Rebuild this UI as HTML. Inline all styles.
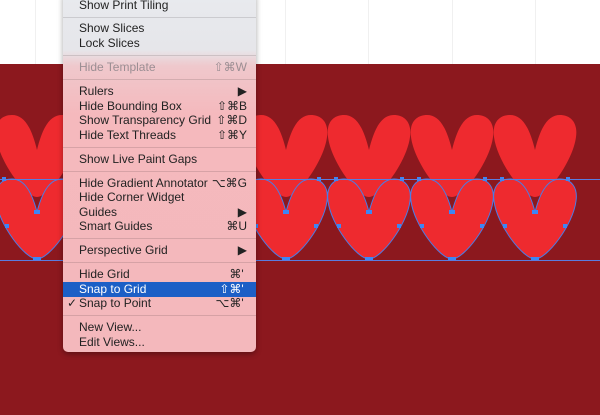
<!DOCTYPE html><html><head><style>
body{margin:0;width:600px;height:415px;overflow:hidden;position:relative;background:#fff;font-family:"Liberation Sans",sans-serif}
#bg{position:absolute;left:0;top:0}
.menu{position:absolute;left:63px;top:-6px;width:193px;height:358px;border-radius:0 0 5px 5px;background:linear-gradient(#e8eaee 0,#e6e6ea 56px,#efc8cc 72px,#f5b9bd 120px,#f4b8bc 100%);box-shadow:0 2px 6px rgba(0,0,0,.35);font-size:12px;color:#222}
.it{position:absolute;left:16px;right:9px;height:15px;line-height:15px}
.it span{position:absolute;right:0;top:0}
.dis{color:#9b8e93}
.sep{position:absolute;left:0;right:0;height:1px;background:rgba(0,0,0,.12)}
.hl{position:absolute;left:0;right:0;height:15px;background:#1c5fc6}
</style></head><body>
<svg id="bg" width="600" height="415" xmlns="http://www.w3.org/2000/svg"></svg>
<div class="menu">
<div class="it" style="top:4px">Show Print Tiling</div>
<div class="sep" style="top:23px"></div>
<div class="it" style="top:27px">Show Slices</div>
<div class="it" style="top:42px">Lock Slices</div>
<div class="sep" style="top:61px"></div>
<div class="it dis" style="top:66px">Hide Template<span>⇧⌘W</span></div>
<div class="sep" style="top:85px"></div>
<div class="it" style="top:90px">Rulers<span>▶</span></div>
<div class="it" style="top:105px">Hide Bounding Box<span>⇧⌘B</span></div>
<div class="it" style="top:119px">Show Transparency Grid<span>⇧⌘D</span></div>
<div class="it" style="top:134px">Hide Text Threads<span>⇧⌘Y</span></div>
<div class="sep" style="top:153px"></div>
<div class="it" style="top:158px">Show Live Paint Gaps</div>
<div class="sep" style="top:177px"></div>
<div class="it" style="top:182px">Hide Gradient Annotator<span>⌥⌘G</span></div>
<div class="it" style="top:196px">Hide Corner Widget</div>
<div class="it" style="top:211px">Guides<span>▶</span></div>
<div class="it" style="top:225px">Smart Guides<span>⌘U</span></div>
<div class="sep" style="top:244px"></div>
<div class="it" style="top:249px">Perspective Grid<span>▶</span></div>
<div class="sep" style="top:268px"></div>
<div class="it" style="top:273px">Hide Grid<span>⌘'&nbsp;</span></div>
<div class="hl" style="top:288px"></div>
<div class="it" style="top:288px;color:#fff">Snap to Grid<span>⇧⌘'&nbsp;</span></div>
<div class="it" style="top:302px"><b style="position:absolute;left:-12px;font-weight:normal">✓</b>Snap to Point<span>⌥⌘'&nbsp;</span></div>
<div class="sep" style="top:321px"></div>
<div class="it" style="top:326px">New View...</div>
<div class="it" style="top:341px">Edit Views...</div>
</div>
<script>
var s='<rect x="0" y="64" width="600" height="351" fill="#8c181e"/>';
[35,285,368,452,535].forEach(function(x){s+='<rect x="'+x+'" y="0" width="1" height="64" fill="#f0f0f0"/>'});
function h(c,n,t,b){return 'M'+c+','+n+' C'+(c-6)+','+(t+10)+' '+(c-14)+','+t+' '+(c-25)+','+t+' C'+(c-36)+','+t+' '+(c-43)+','+(t+8)+' '+(c-41)+','+(t+22)+' C'+(c-38)+','+(t+46)+' '+(c-12)+','+b+' '+c+','+b+' C'+(c+12)+','+b+' '+(c+38)+','+(t+46)+' '+(c+41)+','+(t+22)+' C'+(c+43)+','+(t+8)+' '+(c+36)+','+t+' '+(c+25)+','+t+' C'+(c+14)+','+t+' '+(c+6)+','+(t+10)+' '+c+','+n+'Z';}
for(var k=-2;k<7;k++){var c=37+83*k;s+='<path d="'+h(c,150,115,197)+'" fill="#ee2a2f"/>';}
for(var k=-2;k<7;k++){var c=37+83*k;s+='<path d="'+h(c,212,179,259)+'" fill="#ee2a2f" stroke="#4a7de8" stroke-width="1"/>';
[[c,212,6],[c-33,179,4],[c+33,179,4],[c-30,226,4],[c+30,226,4],[c,259,8]].forEach(function(p){s+='<rect x="'+(p[0]-p[2]/2)+'" y="'+(p[1]-2)+'" width="'+p[2]+'" height="4" fill="#3d86f5"/>'});}
s+='<rect x="0" y="179" width="600" height="1" fill="#5a7de0"/><rect x="0" y="260" width="600" height="1" fill="#5a7de0"/>';
document.getElementById('bg').innerHTML=s;
</script>
</body></html>
